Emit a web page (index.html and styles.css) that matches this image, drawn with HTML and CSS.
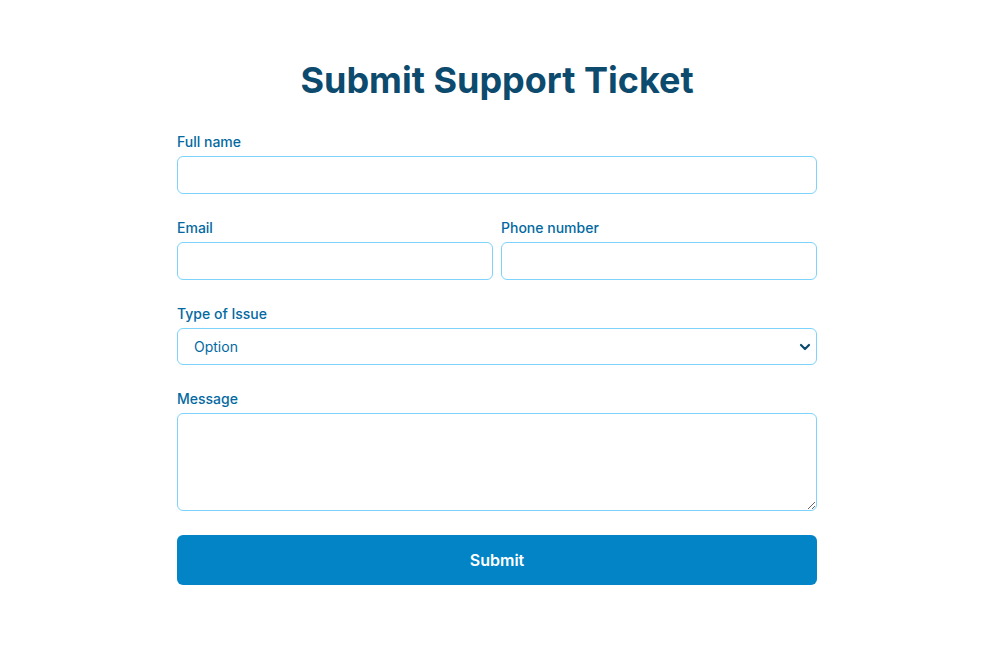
FILE: index.html
```html
<!DOCTYPE html>
<html lang="en">
<head>
<meta charset="utf-8">
<title>Submit Support Ticket</title>
<link rel="stylesheet" href="styles.css">
</head>
<body>
<main class="page">
  <form class="ticket">
    <h1 class="title">Submit Support Ticket</h1>
    <div class="field">
      <label class="label" for="name">Full name</label>
      <input class="control" id="name" type="text">
    </div>
    <div class="row">
      <div class="field">
        <label class="label" for="email">Email</label>
        <input class="control" id="email" type="email">
      </div>
      <div class="field">
        <label class="label" for="phone">Phone number</label>
        <input class="control" id="phone" type="tel">
      </div>
    </div>
    <div class="field">
      <label class="label" for="issue">Type of Issue</label>
      <div class="select-wrap">
        <select class="control select" id="issue">
          <option>Option</option>
        </select>
        <svg class="chevron" width="12" height="8" viewBox="0 0 12 8" aria-hidden="true"><path d="M2 2l4 4 4-4" fill="none" stroke="#0c4a6e" stroke-width="2.2" stroke-linecap="round" stroke-linejoin="round"/></svg>
      </div>
    </div>
    <div class="field">
      <label class="label" for="msg">Message</label>
      <textarea class="control area" id="msg"></textarea>
    </div>
    <button class="submit" type="button">Submit</button>
  </form>
</main>
</body>
</html>
```

FILE: styles.css
```css
* { box-sizing: border-box; }
html, body { margin: 0; background: #ffffff; }
body { font-family: Inter, "Noto Sans", sans-serif; }
.page {
  padding: 58px 11px 0 0;
  display: flex;
  justify-content: center;
}
.ticket {
  width: 640px;
  display: flex;
  flex-direction: column;
}
.title {
  margin: 0 0 30px;
  text-align: center;
  font-size: 36px;
  line-height: 44px;
  font-weight: 700;
  color: #0c4a6e;
}
.field {
  display: flex;
  flex-direction: column;
  gap: 4px;
  margin-bottom: 24px;
  min-width: 0;
}
.row {
  display: grid;
  grid-template-columns: 1fr 1fr;
  gap: 8px;
}
.label {
  font-size: 14px;
  line-height: 20px;
  font-weight: 500;
  color: #0369a1;
}
.control {
  width: 100%;
  height: 38px;
  border: 1px solid #7dd3fc;
  border-radius: 6px;
  background: #ffffff;
  font-family: inherit;
  font-size: 14px;
  color: #0369a1;
  outline: none;
}
.select-wrap { position: relative; }
.select {
  appearance: none;
  -webkit-appearance: none;
  height: 37px;
  padding: 0 16px;
}
.chevron {
  position: absolute;
  right: 6px;
  top: 15px;
  pointer-events: none;
}
.area {
  height: 98px;
  resize: vertical;
  padding: 8px 12px;
}
.submit {
  height: 50px;
  border: 0;
  border-radius: 6px;
  background: #0284c7;
  color: #ffffff;
  font-family: inherit;
  font-size: 16px;
  font-weight: 600;
}
```
